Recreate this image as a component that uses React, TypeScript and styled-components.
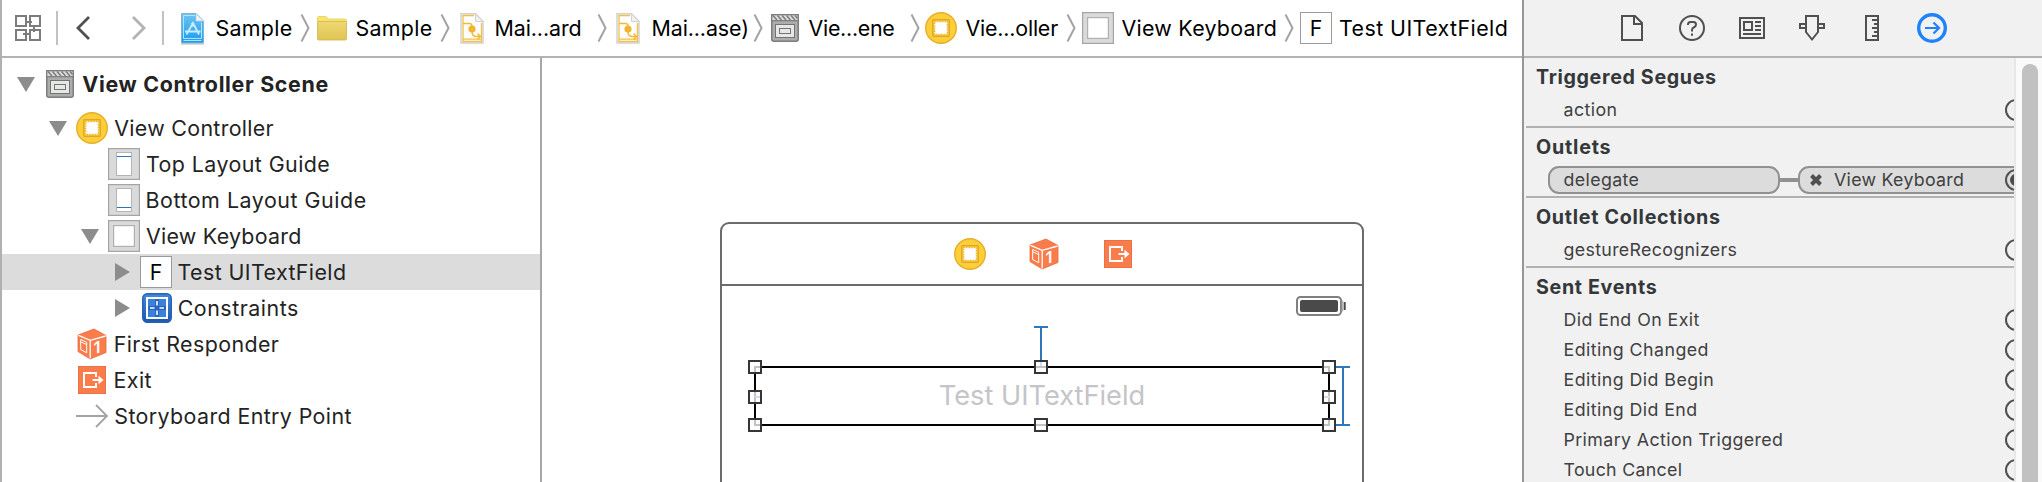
import React from "react";
import styled, { createGlobalStyle } from "styled-components";

const GlobalStyle = createGlobalStyle`
  * { box-sizing: border-box; }
  body { margin: 0; background: #fff; font-family: Inter, "Liberation Sans", sans-serif; }
  svg { display: block; flex: none; overflow: visible; }
`;

const Window = styled.div`
  display: flex;
  width: 2042px;
  height: 482px;
  overflow: hidden;
  background: #fff;
`;

const Editor = styled.div`
  display: flex;
  flex-direction: column;
  width: 1522px;
  flex: none;
  border-left: 2px solid #b0b0b0;
`;

const JumpBar = styled.div`
  display: flex;
  align-items: center;
  height: 58px;
  flex: none;
  padding-left: 13px;
  border-bottom: 2px solid #b3b3b3;
`;

const Divider = styled.div<{ $left: number; $right: number }>`
  width: 2px;
  height: 34px;
  margin: 0 ${(p) => p.$right}px 0 ${(p) => p.$left}px;
  background: #c2c2c2;
`;

const Crumb = styled.div<{ $width: number }>`
  display: flex;
  align-items: center;
  flex: none;
  width: ${(p) => p.$width}px;
`;

const IconSlot = styled.div<{ $width: number }>`
  flex: none;
  width: ${(p) => p.$width}px;
`;

const Label = styled.span<{ $track: number }>`
  color: #000;
  font-size: 21.4px;
  line-height: 28px;
  white-space: nowrap;
  letter-spacing: ${(p) => p.$track}px;
`;

const CrumbGap = styled.div<{ $width: number }>`
  flex: none;
  width: ${(p) => p.$width}px;
`;

const Workspace = styled.div`
  display: flex;
  flex: 1;
  min-height: 0;
`;

const Outline = styled.div`
  width: 540px;
  flex: none;
  border-right: 2px solid #a6a6a6;
`;

const OutlineRow = styled.div<{ $indent: number; $selected?: boolean; $tall?: boolean }>`
  display: flex;
  align-items: center;
  height: ${(p) => (p.$tall ? 52 : 36)}px;
  padding-left: ${(p) => p.$indent}px;
  background: ${(p) => (p.$selected ? "#dcdcdc" : "transparent")};
`;

const Disclosure = styled.div<{ $width: number }>`
  flex: none;
  width: ${(p) => p.$width}px;
`;

const OutlineLabel = styled(Label)<{ $strong?: boolean }>`
  color: #232323;
  font-weight: ${(p) => (p.$strong ? 700 : 400)};
`;

const GlyphTile = styled.div`
  display: flex;
  align-items: center;
  justify-content: center;
  width: 32px;
  height: 32px;
  border: 1.5px solid #9a9a9a;
  background: #fff;
  color: #000;
  font-size: 21.4px;
  line-height: 28px;
`;

const Canvas = styled.div`
  flex: 1;
  padding: 164px 0 0 178px;
  overflow: hidden;
`;

const SceneFrame = styled.div`
  width: 644px;
  height: 300px;
  border: 2px solid #6b6b6b;
  border-radius: 9px 9px 0 0;
`;

const SceneDock = styled.div`
  display: flex;
  align-items: center;
  height: 62px;
  padding-left: 232px;
  border-bottom: 2px solid #6b6b6b;
`;

const DockItem = styled.div<{ $after: number }>`
  margin-right: ${(p) => p.$after}px;
`;

const StatusBar = styled.div`
  display: flex;
  justify-content: flex-end;
  padding: 10px 16px 0 0;
`;

const TextField = styled.div`
  position: relative;
  display: flex;
  align-items: center;
  justify-content: center;
  width: 576px;
  height: 60px;
  margin: 50px 0 0 32px;
  padding-bottom: 1px;
  border: 2px solid #000;
  color: #c4c4c9;
  font-size: 27.2px;
`;

const Guides = styled.svg`
  position: absolute;
  left: -2px;
  top: -42px;
`;

const Handle = styled.i<{ $x: number; $y: number }>`
  position: absolute;
  left: ${(p) => p.$x}px;
  top: ${(p) => p.$y}px;
  width: 14px;
  height: 14px;
  border: 2px solid #363636;
  background: rgba(255, 255, 255, 0.76);
`;

const Inspector = styled.div`
  display: flex;
  flex-direction: column;
  flex: 1;
  border-left: 2px solid #969696;
  background: #f1f1f1;
`;

const InspectorTabs = styled.div`
  display: flex;
  height: 58px;
  flex: none;
  padding-left: 78px;
  border-bottom: 2px solid #b3b3b3;
`;

const InspectorTab = styled.div`
  display: flex;
  align-items: center;
  justify-content: center;
  width: 60px;
`;

const InspectorBody = styled.div`
  display: flex;
  flex: 1;
  min-height: 0;
`;

const Connections = styled.div`
  width: 490px;
  padding-left: 2px;
  overflow: hidden;
`;

const Section = styled.section`
  padding-bottom: 1px;
  border-bottom: 2px solid #b1b1b1;
`;

const SectionTitle = styled.h2<{ $track: number }>`
  margin: 0;
  padding-left: 10px;
  height: 37px;
  color: #34383a;
  font-size: 19.7px;
  font-weight: 700;
  line-height: 39px;
  letter-spacing: ${(p) => p.$track}px;
`;

const ConnectionRow = styled.div<{ $indent: number }>`
  display: flex;
  align-items: center;
  height: 30px;
  padding-left: ${(p) => p.$indent}px;
`;

const ConnectionLabel = styled.span<{ $track: number }>`
  color: #404040;
  font-size: 17.8px;
  line-height: 24px;
  white-space: nowrap;
  letter-spacing: ${(p) => p.$track}px;
`;

const Pill = styled.div<{ $width: number; $pad: number }>`
  display: flex;
  align-items: center;
  flex: none;
  width: ${(p) => p.$width}px;
  height: 28px;
  padding: 0 2px 0 ${(p) => p.$pad}px;
  border: 2px solid #919191;
  border-radius: 11px;
  background: #dcdcdc;
`;

const Wire = styled.div`
  flex: none;
  width: 18px;
  height: 4px;
  background: #919191;
`;

const RemoveSlot = styled.div`
  flex: none;
  width: 24px;
`;

const Port = styled.div<{ $bleed: number }>`
  display: flex;
  align-items: center;
  justify-content: center;
  flex: none;
  width: 22px;
  height: 22px;
  margin: 0 ${(p) => -p.$bleed}px 0 auto;
  border: 2px solid #505050;
  border-radius: 50%;
`;

const PortDot = styled.div`
  width: 12px;
  height: 12px;
  border-radius: 50%;
  background: #4a4a4a;
`;

const ScrollTrack = styled.div`
  flex: 1;
  padding: 6px 4px 0 6px;
  border-left: 2px solid #e7e7e7;
  background: #fafafa;
`;

const ScrollThumb = styled.div`
  height: 460px;
  border-radius: 8px;
  background: #c1c1c1;
`;

const RelatedIcon = () => (
  <svg width="27" height="26" fill="none" stroke="#7c7c7c" strokeWidth="2">
    <path d="M1 1h10v10H1zM15 1h10v10H15zM1 15h10v10H1zM15 15h10v10H15z" />
    <path d="M11 7h6M19 11v6M11 19h-3M9 19h6" />
  </svg>
);

const BackIcon = ({ forward, color }: { forward?: boolean; color: string }) => (
  <svg width="14" height="24" fill="none" stroke={color} strokeWidth="2.8">
    <path d={forward ? "M1 1l11 11L1 23" : "M13 1L2 12l11 11"} />
  </svg>
);

const CrumbChevron = () => (
  <svg width="10" height="28" fill="none" stroke="#a3a3a3" strokeWidth="2">
    <path d="M1.5 0.5L8.5 14L1.5 27.5" />
  </svg>
);

const ProjectIcon = () => (
  <svg width="23" height="31">
    <defs>
      <linearGradient id="projectFill" x1="0" y1="0" x2="0" y2="1">
        <stop offset="0" stopColor="#6cc5f0" />
        <stop offset="1" stopColor="#189cf4" />
      </linearGradient>
    </defs>
    <path d="M0 31h23" stroke="#cfcfcf" strokeWidth="1.5" />
    <path d="M.5.5h14.500l7.500 7.500v22H.5z" fill="url(#projectFill)" stroke="#7fb4d2" strokeWidth="1" />
    <path d="M15 1v7h7.500z" fill="#f1f4f6" stroke="#b9cfdc" strokeWidth=".7" />
    <path d="M2.500 25.500V2.500H14M2.500 27.500h18M20.500 9.500v16h-18" fill="none" stroke="#b4e2fb" strokeWidth="1" />
    <path d="M5.500 21.500L12 10l6 11.500M4 18.500h15.500M10.500 10l2 3.500" fill="none" stroke="#c9ebfc" strokeWidth="1.800" />
  </svg>
);

const FolderIcon = () => (
  <svg width="30" height="25">
    <defs>
      <linearGradient id="folderFill" x1="0" y1="0" x2="0" y2="1">
        <stop offset="0" stopColor="#efd873" />
        <stop offset="1" stopColor="#dfc453" />
      </linearGradient>
    </defs>
    <path d="M.5 6V2q0-1.500 1.500-1.500h7l2.500 2.500h16.500q1.500 0 1.500 1.500V7z" fill="#fae46c" stroke="#e4cb5c" strokeWidth=".8" />
    <rect x=".5" y="5.500" width="29" height="18.500" rx="1" fill="url(#folderFill)" stroke="#cfb54e" strokeWidth=".8" />
  </svg>
);

const StoryboardIcon = () => (
  <svg width="24" height="31">
    <path d="M1 .8h14.500l7.500 7.500V30H1z" fill="#fffefb" stroke="#d2d2d2" strokeWidth="1.500" />
    <path d="M15.500 1v7.500h7.500z" fill="#f1f1f1" stroke="#d2d2d2" strokeWidth="1" />
    <path d="M14 2.500H3v26h18.500V10M3 26.200h18" fill="none" stroke="#f0c048" strokeWidth="1.300" />
    <path d="M3 10.500h6.500q2.500 0 2.500 3v5q0 5 4.500 5h3M17.500 20.500l3 3-3 3" fill="none" stroke="#f0b93a" strokeWidth="1.500" />
    <circle cx="12" cy="16" r="3.600" fill="#f0b52f" />
  </svg>
);

const SceneIcon = () => (
  <svg width="28" height="28">
    <path d="M.75 6V.75h26.500V25q0 2.200-2.200 2.200H3Q.75 27.200.75 25z" fill="#adadad" stroke="#7d7d7d" strokeWidth="1.500" />
    <path d="M1.500 1.500h25V6h-25z" fill="#dedede" />
    <path d="M2 1.500L6 6M6.500 1.500l4 4.500M11 1.500l4 4.500M15.500 1.500l4 4.500M20 1.500l4 4.500M24 1.500l2.500 3" stroke="#7a7a7a" strokeWidth="1.500" />
    <path d="M1 6.700h26" stroke="#7d7d7d" strokeWidth="1.200" />
    <rect x="4.500" y="10.500" width="19" height="13" fill="#e6e8e6" stroke="#747474" />
    <rect x="8.500" y="14.500" width="11" height="5" fill="#e6e8e6" stroke="#747474" />
  </svg>
);

const ControllerIcon = () => (
  <svg width="32" height="32">
    <circle cx="16" cy="16" r="15.300" fill="#fdcf37" stroke="#e6ae2e" strokeWidth="1.400" />
    <rect x="7.700" y="7.700" width="16.600" height="16.600" rx=".8" fill="#fbc935" stroke="#dfa52d" strokeWidth="1.200" />
    <rect x="9.500" y="9.500" width="13" height="13" fill="#fff" />
    <rect x="9.500" y="9.500" width="13" height="13" fill="none" stroke="#f0b52f" strokeWidth="1.600" strokeDasharray="1.300 1.300" />
  </svg>
);

const ViewIcon = () => (
  <svg width="32" height="32">
    <rect x=".6" y=".6" width="30.800" height="30.800" fill="#dadada" stroke="#a4a4a4" strokeWidth="1.200" />
    <rect x="5.600" y="5.600" width="20.800" height="20.800" fill="#fff" stroke="#b0b0b0" strokeWidth="1.200" />
  </svg>
);

const GuideIcon = ({ y }: { y: number }) => (
  <svg width="32" height="32">
    <rect x=".6" y=".6" width="30.800" height="30.800" fill="#dadada" stroke="#a4a4a4" strokeWidth="1.200" />
    <rect x="8.500" y="4.500" width="15" height="23" fill="#fff" stroke="#b4b4b4" />
    <path d={`M9 ${y}h14`} stroke="#2c76b8" strokeWidth="1" />
  </svg>
);

const ConstraintsIcon = () => (
  <svg width="30" height="30">
    <defs>
      <linearGradient id="constraintFill" x1="0" y1="0" x2="0" y2="1">
        <stop offset="0" stopColor="#4287e2" />
        <stop offset="1" stopColor="#1d57ae" />
      </linearGradient>
    </defs>
    <rect x=".7" y=".7" width="28.600" height="28.600" rx="4.500" fill="url(#constraintFill)" stroke="#2863b8" strokeWidth="1.400" />
    <rect x="5" y="5" width="20" height="20" fill="#3a80dc" stroke="#fff" strokeWidth="2" />
    <path d="M15 6v18M6 15h18" stroke="#2765c0" strokeWidth="4" />
    <path d="M15 8v4.500M15 17.500V22M8 15h4.500M17.500 15H22" stroke="#fff" strokeWidth="1.600" />
  </svg>
);

const ResponderIcon = () => (
  <svg width="28" height="30">
    <path d="M0 6L16 0l12 6.500v17L12.200 30 0 22.500z" fill="#fb7c4b" />
    <path d="M0 6L16 0l12 6.500v17L12.200 30 0 22.500z" fill="none" stroke="#e56b3e" strokeWidth=".8" />
    <path d="M.5 6.300L12.200 11.300 27.700 7M12.200 11.300V29.500" fill="none" stroke="#fff" strokeWidth="1.300" />
    <path d="M2.700 10.500l6 2.800v10.500l-6-3.300zM2.700 12.800l6 2.800" fill="none" stroke="#fff" strokeWidth="1" />
    <text x="15.500" y="29" transform="skewY(-14)" fill="#fff" fontFamily="Inter, sans-serif" fontWeight="600" fontSize="16.500">
      1
    </text>
  </svg>
);

const ExitIcon = () => (
  <svg width="28" height="28">
    <rect x=".5" y=".5" width="27" height="27" fill="#fb7c4b" stroke="#e8714a" />
    <path d="M18 11V7H6v14h12v-4" fill="none" stroke="#fff" strokeWidth="2" />
    <path d="M14.500 14h7" stroke="#fff" strokeWidth="2" />
    <path d="M20.500 9.800l5 4.200-5 4.200z" fill="#fff" />
  </svg>
);

const EntryIcon = () => (
  <svg width="32" height="24" fill="none" stroke="#a3a3a3" strokeWidth="1.800">
    <path d="M0 12h31M20 1l11 11-11 11" />
  </svg>
);

const OpenTriangle = () => (
  <svg width="18" height="15">
    <path d="M0 0h18L9 15z" fill="#8c8c8c" />
  </svg>
);

const ClosedTriangle = () => (
  <svg width="15" height="18">
    <path d="M0 0v18l15-9z" fill="#8c8c8c" />
  </svg>
);

const BatteryIcon = () => (
  <svg width="50" height="20">
    <rect x="1" y="1" width="44" height="18" rx="3.500" fill="#fff" stroke="#808080" strokeWidth="2" />
    <rect x="4" y="4" width="38" height="12" rx="2" fill="#4a4a4a" />
    <path d="M46.500 4.500v11" stroke="#b5b5b5" strokeWidth="1.500" />
    <path d="M48.700 6v8" stroke="#4a4a4a" strokeWidth="2" />
  </svg>
);

const FileTabIcon = () => (
  <svg width="22" height="26" fill="none" stroke="#505050" strokeWidth="2">
    <path d="M1 1h13l7 7v17H1z" />
    <path d="M13 1v8h8" />
  </svg>
);

const HelpTabIcon = () => (
  <svg width="26" height="26" fill="none" stroke="#505050" strokeWidth="2">
    <circle cx="13" cy="13" r="12" />
    <path d="M9 10V9.500Q9 7 11.500 7h3Q17 7 17 9.500q0 2-2 2.700-2 .8-2 2.800v1.500" />
    <path d="M13 18.500v2.300" />
  </svg>
);

const IdentityTabIcon = () => (
  <svg width="26" height="22" fill="none" stroke="#505050" strokeWidth="2">
    <path d="M1 1h24v20H1zM5 5h8v8H5zM16 5h6M16 9h6M16 13h6M4 17h18" />
  </svg>
);

const AttributesTabIcon = () => (
  <svg width="26" height="26" fill="none" stroke="#505050" strokeWidth="2">
    <path d="M7 1h12v16l-6 7.500L7 17zM7 9H1v4h6M19 9h6v4h-6" />
  </svg>
);

const SizeTabIcon = () => (
  <svg width="14" height="26" fill="none" stroke="#505050" strokeWidth="2">
    <path d="M1 1h12v24H1zM7 5h6M9 9h4M7 13h6M9 17h4M7 21h6" />
  </svg>
);

const ConnectionsTabIcon = () => (
  <svg width="30" height="30" fill="none" stroke="#1e82fb">
    <circle cx="15" cy="15" r="13.300" strokeWidth="3.400" />
    <path d="M8 15h14M16.500 9.500L22 15l-5.500 5.500" strokeWidth="2.200" />
  </svg>
);

const RemoveIcon = () => (
  <svg width="12" height="12" stroke="#505050" strokeWidth="4">
    <path d="M1.500 1.500l9 9M10.500 1.500l-9 9" />
  </svg>
);

const crumbs = [
  { icon: <ProjectIcon />, slot: 34.5, text: "Sample", track: 0.3, width: 119, gap: 7 },
  { icon: <FolderIcon />, slot: 38.5, text: "Sample", track: 0.3, width: 123, gap: 10 },
  { icon: <StoryboardIcon />, slot: 34.5, text: "Mai...ard", track: -0.09, width: 137, gap: 9 },
  { icon: <StoryboardIcon />, slot: 35.5, text: "Mai...ase)", track: -0.1, width: 137, gap: 8 },
  { icon: <SceneIcon />, slot: 37.5, text: "Vie...ene", track: -0.27, width: 139, gap: 5 },
  { icon: <ControllerIcon />, slot: 40.5, text: "Vie...oller", track: -0.19, width: 141, gap: 6 },
  { icon: <ViewIcon />, slot: 39.5, text: "View Keyboard", track: 0.26, width: 202, gap: 6 },
  { icon: <GlyphTile>F</GlyphTile>, slot: 39, text: "Test UITextField", track: 0.43, width: 210, gap: 0 },
];

type OutlineItem = {
  indent: number;
  toggle?: "open" | "closed";
  icon: React.ReactNode;
  slot: number;
  text: string;
  track: number;
  strong?: boolean;
  selected?: boolean;
};

const outline: OutlineItem[] = [
  { indent: 15, toggle: "open", icon: <SceneIcon />, slot: 36.3, text: "View Controller Scene", track: 0.68, strong: true },
  { indent: 47, toggle: "open", icon: <ControllerIcon />, slot: 38.3, text: "View Controller", track: 0.3 },
  { indent: 106, icon: <GuideIcon y={8.5} />, slot: 38, text: "Top Layout Guide", track: 0.43 },
  { indent: 106, icon: <GuideIcon y={23.5} />, slot: 37.5, text: "Bottom Layout Guide", track: 0.54 },
  { indent: 79, toggle: "open", icon: <ViewIcon />, slot: 38, text: "View Keyboard", track: 0.26 },
  { indent: 113, toggle: "closed", icon: <GlyphTile>F</GlyphTile>, slot: 37.5, text: "Test UITextField", track: 0.41, selected: true },
  { indent: 113, toggle: "closed", icon: <ConstraintsIcon />, slot: 35.7, text: "Constraints", track: 0.52 },
  { indent: 76, icon: <ResponderIcon />, slot: 35.7, text: "First Responder", track: 0.4 },
  { indent: 76, icon: <ExitIcon />, slot: 35.5, text: "Exit", track: 0.47 },
  { indent: 74, icon: <EntryIcon />, slot: 38.3, text: "Storyboard Entry Point", track: 0.39 },
];

const toggleWidth = (item: OutlineItem) => {
  if (!item.toggle) return 0;
  if (item.strong) return 29;
  if (item.toggle === "open") return 27;
  return item.text === "Constraints" ? 27 : 25;
};

const sentEvents: [string, number][] = [
  ["Did End On Exit", 0.44],
  ["Editing Changed", 0.46],
  ["Editing Did Begin", 0.45],
  ["Editing Did End", 0.44],
  ["Primary Action Triggered", 0.39],
  ["Touch Cancel", 0.3],
];

const EmptyConnection = ({ text, track }: { text: string; track: number }) => (
  <ConnectionRow $indent={37.5}>
    <ConnectionLabel $track={track}>{text}</ConnectionLabel>
    <Port $bleed={13} />
  </ConnectionRow>
);

const handles = [
  [-8, -8], [278, -8], [566, -8],
  [-8, 22], [566, 22],
  [-8, 50], [278, 50], [566, 50],
];

export default function App() {
  return (
    <Window>
      <GlobalStyle />
      <Editor>
        <JumpBar>
          <RelatedIcon />
          <Divider $left={14} $right={18} />
          <BackIcon color="#505050" />
          <CrumbGap $width={42} />
          <BackIcon forward color="#b2b2b2" />
          <Divider $left={16} $right={17} />
          {crumbs.map((c, i) => (
            <React.Fragment key={i}>
              <Crumb $width={c.width}>
                <IconSlot $width={c.slot}>{c.icon}</IconSlot>
                <Label $track={c.track}>{c.text}</Label>
              </Crumb>
              {i < crumbs.length - 1 && (
                <>
                  <CrumbChevron />
                  <CrumbGap $width={c.gap} />
                </>
              )}
            </React.Fragment>
          ))}
        </JumpBar>
        <Workspace>
          <Outline>
            {outline.map((item) => (
              <OutlineRow key={item.text} $indent={item.indent} $selected={item.selected} $tall={item.strong}>
                <Disclosure $width={toggleWidth(item)}>
                  {item.toggle === "open" && <OpenTriangle />}
                  {item.toggle === "closed" && <ClosedTriangle />}
                </Disclosure>
                <IconSlot $width={item.slot}>{item.icon}</IconSlot>
                <OutlineLabel $track={item.track} $strong={item.strong}>
                  {item.text}
                </OutlineLabel>
              </OutlineRow>
            ))}
          </Outline>
          <Canvas>
            <SceneFrame>
              <SceneDock>
                <DockItem $after={44}><ControllerIcon /></DockItem>
                <DockItem $after={46}><ResponderIcon /></DockItem>
                <DockItem $after={0}><ExitIcon /></DockItem>
              </SceneDock>
              <StatusBar><BatteryIcon /></StatusBar>
              <TextField>
                Test UITextField
                <Guides width="600" height="104" fill="none" stroke="#2f77b8" strokeWidth="2">
                  <path d="M280 1h14M287 1v39M582 41h14M582 99h14M589 41v58M1 71h7M568 71h8" />
                </Guides>
                {handles.map(([x, y]) => (
                  <Handle key={`${x},${y}`} $x={x} $y={y} />
                ))}
              </TextField>
            </SceneFrame>
          </Canvas>
        </Workspace>
      </Editor>
      <Inspector>
        <InspectorTabs>
          <InspectorTab><FileTabIcon /></InspectorTab>
          <InspectorTab><HelpTabIcon /></InspectorTab>
          <InspectorTab><IdentityTabIcon /></InspectorTab>
          <InspectorTab><AttributesTabIcon /></InspectorTab>
          <InspectorTab><SizeTabIcon /></InspectorTab>
          <InspectorTab><ConnectionsTabIcon /></InspectorTab>
        </InspectorTabs>
        <InspectorBody>
          <Connections>
            <Section>
              <SectionTitle $track={0.64}>Triggered Segues</SectionTitle>
              <EmptyConnection text="action" track={0.43} />
            </Section>
            <Section>
              <SectionTitle $track={0.8}>Outlets</SectionTitle>
              <ConnectionRow $indent={22}>
                <Pill $width={232} $pad={13.5}>
                  <ConnectionLabel $track={0.38}>delegate</ConnectionLabel>
                </Pill>
                <Wire />
                <Pill $width={233} $pad={10}>
                  <RemoveSlot><RemoveIcon /></RemoveSlot>
                  <ConnectionLabel $track={0.28}>View Keyboard</ConnectionLabel>
                  <Port $bleed={0}><PortDot /></Port>
                </Pill>
              </ConnectionRow>
            </Section>
            <Section>
              <SectionTitle $track={0.7}>Outlet Collections</SectionTitle>
              <EmptyConnection text="gestureRecognizers" track={0.33} />
            </Section>
            <Section>
              <SectionTitle $track={0.65}>Sent Events</SectionTitle>
              {sentEvents.map(([text, track]) => (
                <EmptyConnection key={text} text={text} track={track} />
              ))}
            </Section>
          </Connections>
          <ScrollTrack>
            <ScrollThumb />
          </ScrollTrack>
        </InspectorBody>
      </Inspector>
    </Window>
  );
}
